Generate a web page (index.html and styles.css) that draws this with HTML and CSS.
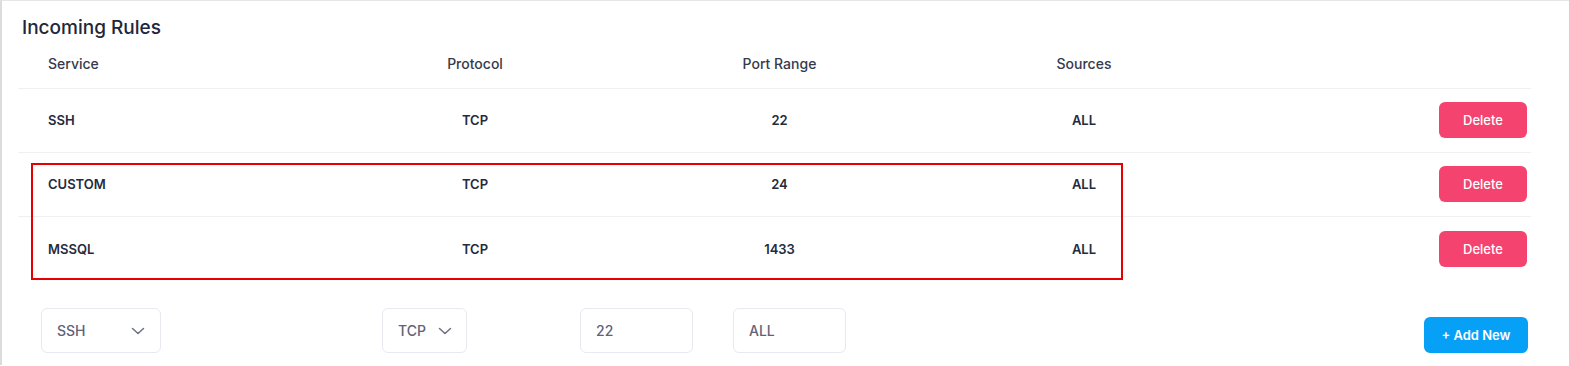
FILE: index.html
```html
<!DOCTYPE html>
<html lang="en">
<head>
    <meta charset="UTF-8" />
    <meta name="viewport" content="width=device-width, initial-scale=1" />
    <title>Incoming Rules</title>
    <link rel="stylesheet" href="styles.css">
</head>
<body>
    <div class="rules-card">
        <h2 class="rules-title">Incoming Rules</h2>

        <div class="rules-table">
            <div class="rules-row rules-head">
                <div class="cell cell-service">Service</div>
                <div class="cell">Protocol</div>
                <div class="cell">Port Range</div>
                <div class="cell">Sources</div>
                <div class="cell cell-action"></div>
            </div>
            <div class="rules-row">
                <div class="cell cell-service">SSH</div>
                <div class="cell">TCP</div>
                <div class="cell">22</div>
                <div class="cell">ALL</div>
                <div class="cell cell-action"><button class="btn-delete">Delete</button></div>
            </div>
            <div class="rules-row">
                <div class="cell cell-service">CUSTOM</div>
                <div class="cell">TCP</div>
                <div class="cell">24</div>
                <div class="cell">ALL</div>
                <div class="cell cell-action"><button class="btn-delete">Delete</button></div>
            </div>
            <div class="rules-row">
                <div class="cell cell-service">MSSQL</div>
                <div class="cell">TCP</div>
                <div class="cell">1433</div>
                <div class="cell">ALL</div>
                <div class="cell cell-action"><button class="btn-delete">Delete</button></div>
            </div>
        </div>

        <form class="new-rule">
            <div class="field select-service">
                <span>SSH</span>
                <svg class="chevron" viewBox="0 0 14 8" width="14" height="8"><path d="M1.5 1.5l5.5 5 5.5-5" fill="none" stroke="#6b7083" stroke-width="1.5" stroke-linecap="round" stroke-linejoin="round"/></svg>
            </div>
            <div class="field select-protocol">
                <span>TCP</span>
                <svg class="chevron" viewBox="0 0 14 8" width="14" height="8"><path d="M1.5 1.5l5.5 5 5.5-5" fill="none" stroke="#6b7083" stroke-width="1.5" stroke-linecap="round" stroke-linejoin="round"/></svg>
            </div>
            <input class="field input-port" type="text" value="22" />
            <input class="field input-source" type="text" value="ALL" />
            <button type="button" class="btn-add">+ Add New</button>
        </form>

        <div class="highlight-box"></div>
    </div>
</body>
</html>
```

FILE: styles.css
```css
body {
    margin: 0;
    background: #fff;
    font-family: Inter, "Open Sans", sans-serif;
    color: #252a3d;
}
.rules-card {
    position: relative;
    height: 365px;
    border-top: 1px solid #e6e6e6;
    border-left: 2px solid #dcdcdc;
    padding: 0 38px 0 16px;
    box-sizing: border-box;
}
.rules-title {
    margin: 0 0 0 4px;
    padding-top: 14px;
    font-size: 19px;
    line-height: 26px;
    font-weight: 500;
    color: #22263a;
}
.rules-row {
    display: grid;
    grid-template-columns: 305px 304px 305px 304px 1fr;
    align-items: center;
    height: 64px;
    box-sizing: border-box;
    padding-bottom: 1px;
    border-bottom: 1px solid #eef0f4;
    font-size: 13px;
    font-weight: 600;
    color: #252a3d;
}
.rules-row:last-child {
    border-bottom: none;
}
.rules-head {
    height: 48px;
    padding-bottom: 2px;
    font-size: 14px;
    font-weight: 500;
    color: #363a4c;
}
.cell {
    text-align: center;
}
.cell-service {
    text-align: left;
    padding-left: 30px;
}
.cell-action {
    display: flex;
    justify-content: flex-end;
    padding-right: 4px;
}
.btn-delete {
    width: 88px;
    height: 36px;
    border: none;
    border-radius: 6px;
    background: #f4436e;
    color: #fff;
    font-family: Inter, sans-serif;
    font-size: 13px;
    font-weight: 500;
    cursor: pointer;
}
.new-rule {
    display: flex;
    align-items: flex-end;
    margin-top: 27px;
    padding: 0 3px 0 23px;
}
.field {
    height: 45px;
    box-sizing: border-box;
    border: 1px solid #e8e9f0;
    border-radius: 6px;
    background: #fff;
    font-family: Inter, sans-serif;
    font-size: 14px;
    font-weight: 500;
    color: #5f6377;
    display: flex;
    align-items: center;
    justify-content: space-between;
    padding: 0 15px;
}
.select-service {
    width: 120px;
}
.select-protocol {
    width: 85px;
    margin-left: 221px;
    padding-right: 14px;
}
.input-port,
.input-source {
    width: 113px;
    outline: none;
}
.input-port {
    margin-left: 113px;
}
.input-source {
    margin-left: 40px;
}
.btn-add {
    margin-left: auto;
    width: 104px;
    height: 36px;
    border: none;
    border-radius: 6px;
    background: #06a0f7;
    color: #fff;
    font-family: Inter, sans-serif;
    font-size: 13px;
    font-weight: 600;
    cursor: pointer;
}
.highlight-box {
    position: absolute;
    left: 29px;
    top: 162px;
    width: 1092px;
    height: 117px;
    border: 2px solid #e80000;
    box-sizing: border-box;
}
```
